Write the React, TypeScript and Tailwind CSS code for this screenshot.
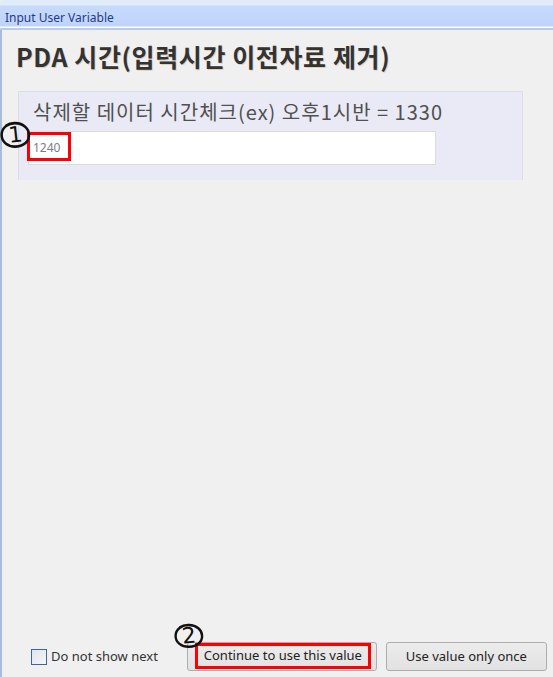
import React from "react";

const Mark = ({ n, className }: { n: string; className: string }) => (
  <div className={`absolute ${className}`}>
    <svg viewBox="0 0 30 26" preserveAspectRatio="none" className="absolute inset-0 w-full h-full" fill="none">
      <path
        d="M16 2.2C8 1.6 1.8 6 1.6 12.6c-.2 6.9 6 11.5 13.7 11.2 7.8-.2 13-4.9 12.8-11C27.9 6.8 22.6 2.3 15 2 11 1.8 8 2.8 6 4.3"
        stroke="#111"
        strokeWidth="2.4"
        strokeLinecap="round"
      />
    </svg>
    <span className="absolute inset-0 flex items-center justify-center text-[22px] leading-none text-[#111] font-['DejaVu_Sans',sans-serif] -rotate-6">
      {n}
    </span>
  </div>
);

export default function App() {
  return (
    <div className="relative w-[553px] h-[677px] overflow-hidden bg-[#f0f0f0] flex flex-col font-['Noto_Sans','Noto_Sans_CJK_KR',sans-serif]">
      {/* title bar */}
      <div className="h-[30px] shrink-0 rounded-tl-[3px] bg-[linear-gradient(to_bottom,#e1ecfb_0px,#e1ecfb_5px,#c7dafc_6px,#bfd4fb_26px,#ffffff_27px,#ffffff_28px,#b7ccf0_28px,#b7ccf0_30px)] pl-[5px] pt-[4px]">
        <span className="text-[12px] leading-[18px] text-[#1f3a8a]">Input User Variable</span>
      </div>

      <div className="flex-1 flex flex-col border-l-2 border-[#a9bcd8] pl-[14px]">
        <h1 className="mt-[9px] text-[25px] leading-[34px] tracking-[0.6px] font-bold text-[#333] font-['Noto_Sans_CJK_KR','Noto_Sans',sans-serif] [text-shadow:1px_1px_0_rgba(160,110,40,0.25)]">
          PDA 시간(입력시간 이전자료 제거)
        </h1>

        <div className="mt-[18px] ml-[2px] w-[505px] h-[89px] bg-[#e9eaf5] border border-b-0 border-[#dcdde8]">
          <div className="pl-[14px] pt-[6px] text-[20px] leading-[28px] text-[#505050] font-['Noto_Sans_CJK_KR','Noto_Sans',sans-serif] tracking-[1px]">
            삭제할 데이터 시간체크(ex) 오후1시반 = 1330
          </div>
          <div className="relative mt-[5px] ml-[9px] w-[408px] h-[34px] bg-white border border-[#dcdcdc] flex items-center pl-[4px]">
            <span className="text-[12px] text-[#7c7c8c]">1240</span>
            <div className="absolute left-[-2px] top-[0px] w-[44px] h-[29px] border-[3px] border-[#ff0000]" />
          </div>
        </div>

        <div className="flex-1" />

        <div className="flex items-center h-[29px] mb-[6px]">
          <div className="ml-[15px] w-[16px] h-[16px] border-[1.5px] border-[#3f6699] bg-[linear-gradient(135deg,#dfe4ee,#f4f6fa)]" />
          <span className="ml-[4px] text-[13px] text-[#333]">Do not show next</span>
          <button className="relative ml-[29px] w-[190px] h-[29px] rounded-[3px] border border-[#adadad] bg-[linear-gradient(to_bottom,#ececec,#e2e2e2)] text-[13px] text-[#222]">
            <div className="absolute left-[7px] top-[0px] w-[176px] h-[26px] border-[3px] border-[#ff0000] flex items-center justify-center">
              Continue to use this value
            </div>
          </button>
          <button className="ml-[9px] w-[161px] h-[29px] rounded-[3px] border border-[#adadad] bg-[linear-gradient(to_bottom,#ececec,#e2e2e2)] text-[13px] text-[#222]">
            Use value only once
          </button>
        </div>
      </div>

      <Mark n="1" className="left-[0px] top-[121px] w-[31px] h-[28px]" />
      <Mark n="2" className="left-[174px] top-[623px] w-[30px] h-[26px]" />
    </div>
  );
}
